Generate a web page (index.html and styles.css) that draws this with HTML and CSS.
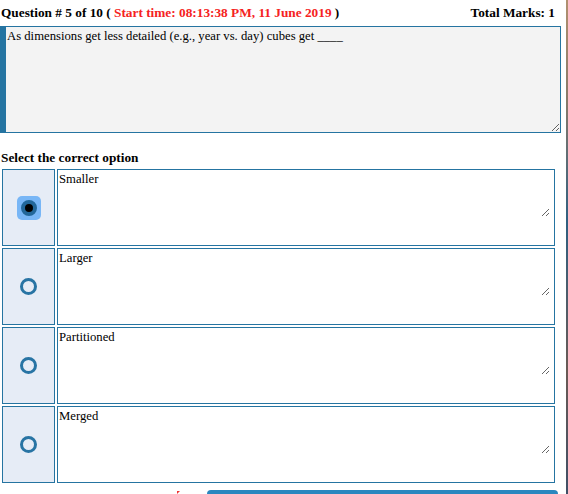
FILE: index.html
```html
<!DOCTYPE html>
<html lang="en">
<head>
    <meta charset="UTF-8">
    <title>Quiz</title>
    <link rel="stylesheet" href="styles.css">
</head>
<body>
    <div class="page">
        <div class="header">
            <span>Question # 5 of 10 ( <span class="start">Start time: 08:13:38 PM, 11 June 2019</span> )</span>
            <span>Total Marks: 1</span>
        </div>
        <textarea class="question" readonly>As dimensions get less detailed (e.g., year vs. day) cubes get ____</textarea>

        <h3>Select the correct option</h3>
        <div class="options">
            <div class="pick"><span class="focus"><span class="radio checked"></span></span></div>
            <div class="answer"><textarea readonly>Smaller</textarea></div>

            <div class="pick"><span class="radio"></span></div>
            <div class="answer"><textarea readonly>Larger</textarea></div>

            <div class="pick"><span class="radio"></span></div>
            <div class="answer"><textarea readonly>Partitioned</textarea></div>

            <div class="pick"><span class="radio"></span></div>
            <div class="answer"><textarea readonly>Merged</textarea></div>
        </div>

        <div class="footer">
            <span class="mark"></span>
            <span class="save"></span>
        </div>
    </div>
</body>
</html>
```

FILE: styles.css
```css
html {
    margin: 0;
    height: 100%;
    background: linear-gradient(to bottom, #b09070, #8a7a6a 20%, #2f5f80 45%, #6a5a55 75%, #3f4f66);
}
body {
    margin: 0;
    width: 566px;
    height: 100%;
    overflow: hidden;
    background-color: #fff;
    font-family: "Liberation Serif", "Times New Roman", serif;
    color: #000;
}
.page {
    display: flex;
    flex-direction: column;
}
.header {
    display: flex;
    justify-content: space-between;
    align-items: center;
    height: 26px;
    padding: 0 11px 0 1px;
    font-size: 13.3px;
    font-weight: bold;
}
.start {
    color: #f52222;
}
textarea {
    box-sizing: border-box;
    font-family: "Liberation Serif", "Times New Roman", serif;
    font-size: 12.7px;
    color: #000;
    margin: 0;
    outline: none;
}
.question {
    width: 561px;
    height: 107px;
    border: 1px solid #2574a1;
    border-left: 6px solid #2574a1;
    background-color: #f3f3f3;
    padding: 2px 2px 2px 1px;
}
h3 {
    margin: 15px 0 0 1px;
    height: 21px;
    line-height: 20px;
    font-size: 13.3px;
    font-weight: bold;
}
.options {
    display: grid;
    grid-template-columns: 53px 498px;
    grid-auto-rows: 77px;
    gap: 2px 2px;
    padding-left: 2px;
}
.pick {
    box-sizing: border-box;
    border: 1px solid #2574a1;
    background-color: #e6ecf6;
    display: flex;
    align-items: center;
    justify-content: center;
}
.answer {
    box-sizing: border-box;
    border: 1px solid #2574a1;
    background-color: #fff;
}
.answer textarea {
    display: block;
    width: 492px;
    height: 47px;
    border: none;
    background-color: transparent;
    padding: 2px 1px 1px 1px;
    resize: vertical;
}
.radio {
    box-sizing: border-box;
    width: 17px;
    height: 17px;
    border: 3px solid #2874a4;
    border-radius: 50%;
}
.focus {
    width: 24px;
    height: 24px;
    border-radius: 5px;
    background-color: #78b6f6;
    display: flex;
    align-items: center;
    justify-content: center;
}
.radio.checked {
    width: 16px;
    height: 16px;
    border: 4px solid #22679a;
    background-color: #000;
}
.footer {
    display: flex;
    align-items: flex-start;
    margin-top: 7px;
    padding-left: 177px;
}
.mark {
    width: 0;
    height: 0;
    border-left: 3px solid #e33;
    border-bottom: 3px solid transparent;
    margin-top: 1px;
}
.save {
    margin-left: 27px;
    width: 351px;
    height: 20px;
    border-radius: 4px 4px 0 0;
    background-color: #2a87bf;
}
```
